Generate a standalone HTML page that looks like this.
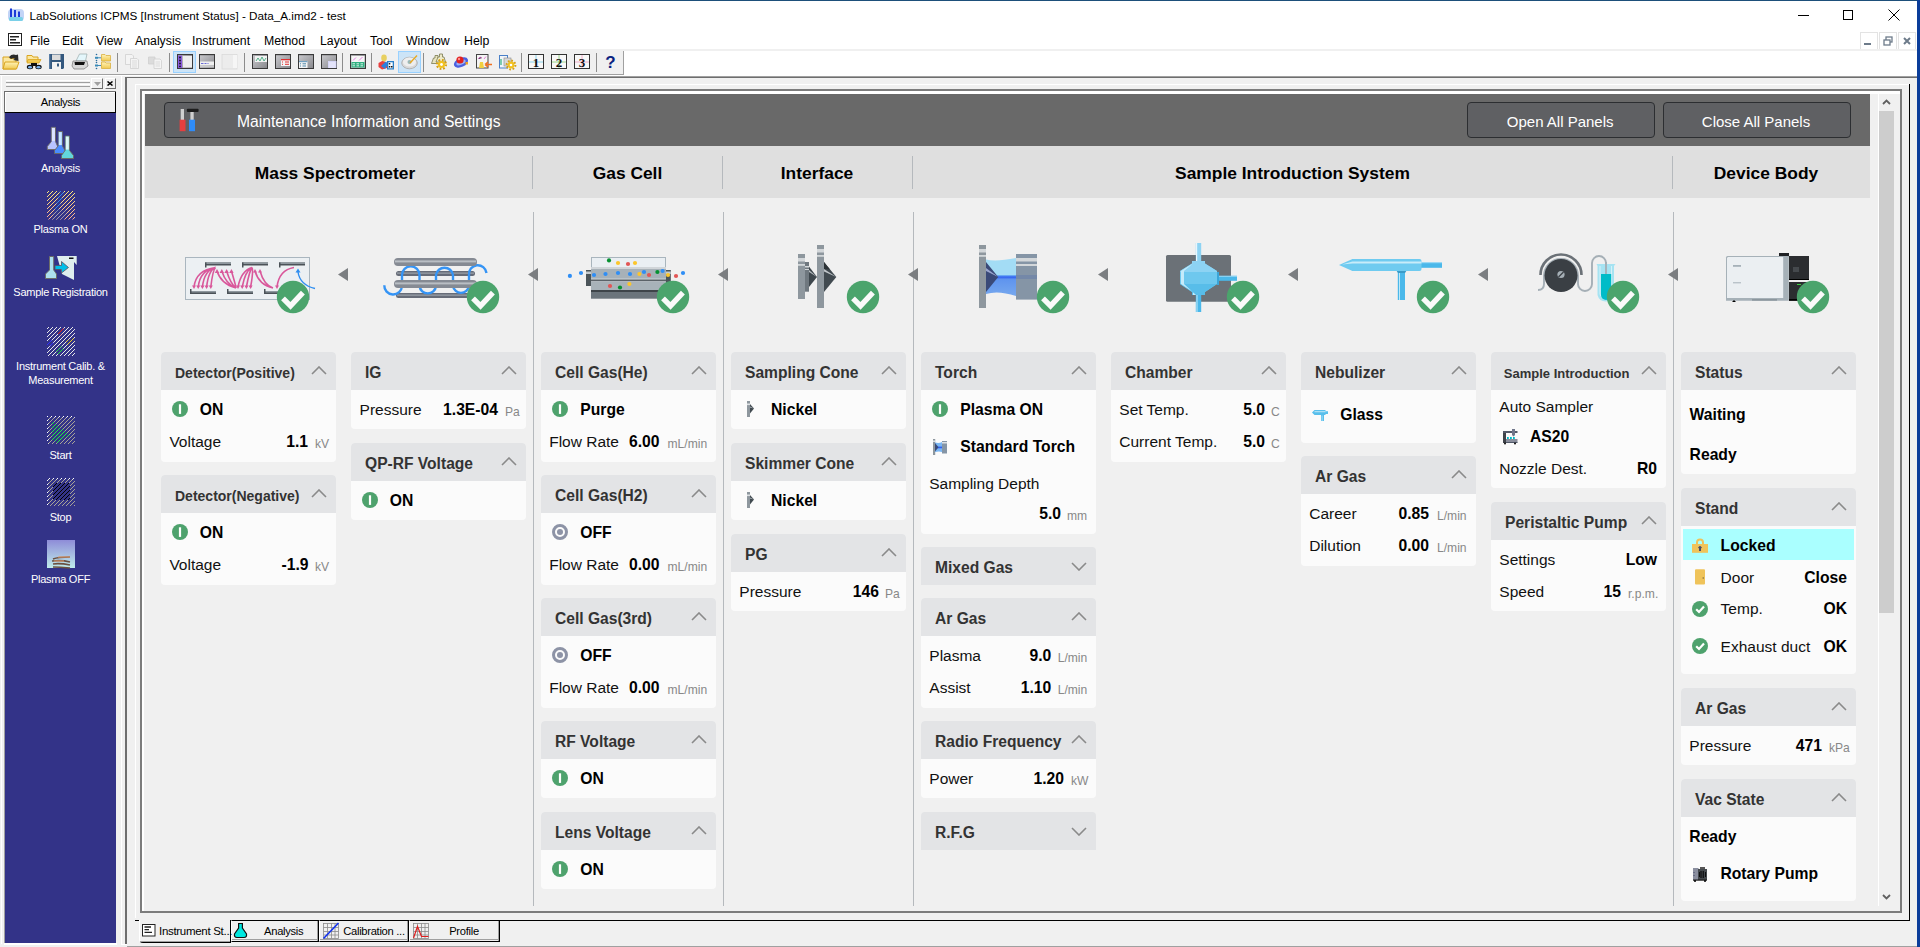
<!DOCTYPE html>
<html><head><meta charset="utf-8"><title>LabSolutions ICPMS</title>
<style>
html,body{margin:0;padding:0;width:1920px;height:947px;overflow:hidden;background:#f0f0f0;font-family:"Liberation Sans", sans-serif;}
body>div,body>svg{position:absolute;}
</style></head><body>
<div style="left:0px;top:0px;width:1920px;height:947px;background:#f0f0f0"></div>
<div style="left:0px;top:0px;width:1920px;height:49px;background:#fff"></div>
<div style="left:0px;top:0px;width:1920px;height:1px;background:#1d4f7a"></div>
<div style="left:29.5px;top:10.10px;font-size:11.7px;line-height:11.7px;font-weight:400;color:#000;white-space:nowrap;">LabSolutions ICPMS [Instrument Status] - Data_A.imd2 - test</div>
<div style="left:1798px;top:15px;width:11px;height:1px;background:#000"></div>
<div style="left:1843px;top:10px;width:10px;height:10px;border:1px solid #000;box-sizing:border-box"></div>
<svg style="left:1888px;top:9px;" width="12" height="12" viewBox="0 0 12 12"><path d="M0.5 0.5L11.5 11.5M11.5 0.5L0.5 11.5" stroke="#000" stroke-width="1"/></svg>
<svg style="left:8px;top:33px;" width="15" height="13" viewBox="0 0 15 13"><rect x="0.5" y="0.5" width="13" height="12" fill="#fff" stroke="#222"/><rect x="2" y="3" width="9" height="1.5" fill="#222"/><rect x="2" y="6" width="6" height="1.5" fill="#222"/><rect x="2" y="9" width="10" height="1.5" fill="#222"/></svg>
<div style="left:30px;top:34.59px;font-size:12.3px;line-height:12.3px;font-weight:400;color:#000;white-space:nowrap;">File</div>
<div style="left:62px;top:34.59px;font-size:12.3px;line-height:12.3px;font-weight:400;color:#000;white-space:nowrap;">Edit</div>
<div style="left:96px;top:34.59px;font-size:12.3px;line-height:12.3px;font-weight:400;color:#000;white-space:nowrap;">View</div>
<div style="left:135px;top:34.59px;font-size:12.3px;line-height:12.3px;font-weight:400;color:#000;white-space:nowrap;">Analysis</div>
<div style="left:192px;top:34.59px;font-size:12.3px;line-height:12.3px;font-weight:400;color:#000;white-space:nowrap;">Instrument</div>
<div style="left:264px;top:34.59px;font-size:12.3px;line-height:12.3px;font-weight:400;color:#000;white-space:nowrap;">Method</div>
<div style="left:320px;top:34.59px;font-size:12.3px;line-height:12.3px;font-weight:400;color:#000;white-space:nowrap;">Layout</div>
<div style="left:370px;top:34.59px;font-size:12.3px;line-height:12.3px;font-weight:400;color:#000;white-space:nowrap;">Tool</div>
<div style="left:406px;top:34.59px;font-size:12.3px;line-height:12.3px;font-weight:400;color:#000;white-space:nowrap;">Window</div>
<div style="left:464px;top:34.59px;font-size:12.3px;line-height:12.3px;font-weight:400;color:#000;white-space:nowrap;">Help</div>
<div style="left:1860px;top:32px;width:18px;height:18px;border:1px solid #e3e3e3;box-sizing:border-box;background:#fff"></div>
<div style="left:1879px;top:32px;width:18px;height:18px;border:1px solid #e3e3e3;box-sizing:border-box;background:#fff"></div>
<div style="left:1898px;top:32px;width:18px;height:18px;border:1px solid #e3e3e3;box-sizing:border-box;background:#fff"></div>
<div style="left:1864px;top:43px;width:7px;height:2px;background:#6d7b8a"></div>
<svg style="left:1883px;top:36px;" width="10" height="10" viewBox="0 0 10 10"><rect x="3" y="1" width="6" height="5" fill="none" stroke="#6d7b8a" stroke-width="1.3"/><rect x="1" y="4" width="6" height="5" fill="#fff" stroke="#6d7b8a" stroke-width="1.3"/></svg>
<svg style="left:1903px;top:37px;" width="8" height="8" viewBox="0 0 8 8"><path d="M1 1L7 7M7 1L1 7" stroke="#6d7b8a" stroke-width="2"/></svg>
<div style="left:0px;top:49px;width:1917px;height:2px;background:#f0f0f0"></div>
<div style="left:0px;top:51px;width:1917px;height:25px;background:#fff"></div>
<div style="left:0px;top:51px;width:624px;height:24px;background:#f0f0f0"></div>
<div style="left:623px;top:51px;width:1px;height:24px;background:#a0a0a0"></div>
<div style="left:0px;top:74px;width:624px;height:1px;background:#a0a0a0"></div>
<div style="left:560px;top:76px;width:1357px;height:1px;background:#a0a0a0"></div>
<div style="left:560px;top:77px;width:1357px;height:1px;background:#fff"></div>
<div style="left:0px;top:75px;width:624px;height:1px;background:#fff"></div>
<div style="left:117px;top:53px;width:1px;height:19px;background:#8c8c8c"></div>
<div style="left:169px;top:53px;width:1px;height:19px;background:#8c8c8c"></div>
<div style="left:244px;top:53px;width:1px;height:19px;background:#8c8c8c"></div>
<div style="left:342px;top:53px;width:1px;height:19px;background:#8c8c8c"></div>
<div style="left:371px;top:53px;width:1px;height:19px;background:#8c8c8c"></div>
<div style="left:423px;top:53px;width:1px;height:19px;background:#8c8c8c"></div>
<div style="left:521px;top:53px;width:1px;height:19px;background:#8c8c8c"></div>
<div style="left:596px;top:53px;width:1px;height:19px;background:#8c8c8c"></div>
<div style="left:1px;top:76px;width:1px;height:868px;background:#fff"></div>
<div style="left:6px;top:80px;width:84px;height:1px;background:#fff"></div>
<div style="left:6px;top:82px;width:84px;height:1px;background:#a0a0a0"></div>
<div style="left:6px;top:84px;width:84px;height:1px;background:#fff"></div>
<div style="left:6px;top:86px;width:84px;height:1px;background:#a0a0a0"></div>
<div style="left:91px;top:78px;width:12px;height:11px;background:#f0f0f0;border-top:1px solid #fff;border-left:1px solid #fff;border-right:1px solid #6e6e6e;border-bottom:1px solid #6e6e6e;box-sizing:border-box"></div>
<div style="left:105px;top:78px;width:11px;height:11px;background:#f0f0f0;border-top:1px solid #fff;border-left:1px solid #fff;border-right:1px solid #6e6e6e;border-bottom:1px solid #6e6e6e;box-sizing:border-box"></div>
<svg style="left:107px;top:81px;" width="6" height="5" viewBox="0 0 6 5"><path d="M0.5 0.5L5.5 4.5M5.5 0.5L0.5 4.5" stroke="#000" stroke-width="1.5"/></svg>
<svg style="left:94px;top:82px;" width="7" height="4" viewBox="0 0 7 4"><path d="M0 0H7L3.5 4Z" fill="#a0a0a0"/></svg>
<div style="left:4px;top:91px;width:112px;height:22px;background:#f0f0f0;border-top:1px solid #6e6e6e;border-left:1px solid #6e6e6e;box-sizing:border-box"></div>
<div style="left:5px;top:92px;width:110px;height:20px;border-top:1px solid #fff;border-left:1px solid #fff;box-sizing:border-box"></div>
<div style="left:115px;top:92px;width:1px;height:21px;background:#000"></div>
<div style="left:5px;top:112px;width:111px;height:1px;background:#000"></div>
<div style="left:-539.5px;width:1200px;text-align:center;top:97.43px;font-size:11.3px;line-height:11.3px;font-weight:400;color:#000;white-space:nowrap;letter-spacing:-0.35px">Analysis</div>
<div style="left:4px;top:113px;width:112px;height:830px;background:#333388;border-left:1px solid #a0a0a0;box-sizing:border-box"></div>
<div style="left:4px;top:943px;width:113px;height:2px;background:#fff"></div>
<div style="left:121px;top:76px;width:1px;height:868px;background:#fff"></div>
<div style="left:-539.5px;width:1200px;text-align:center;top:162.69px;font-size:11px;line-height:11px;font-weight:400;color:#fff;white-space:nowrap;letter-spacing:-0.25px">Analysis</div>
<div style="left:-539.5px;width:1200px;text-align:center;top:224.19px;font-size:11px;line-height:11px;font-weight:400;color:#fff;white-space:nowrap;letter-spacing:-0.25px">Plasma ON</div>
<div style="left:-539.5px;width:1200px;text-align:center;top:286.69px;font-size:11px;line-height:11px;font-weight:400;color:#fff;white-space:nowrap;letter-spacing:-0.25px">Sample Registration</div>
<div style="left:-539.5px;width:1200px;text-align:center;top:361.19px;font-size:11px;line-height:11px;font-weight:400;color:#fff;white-space:nowrap;letter-spacing:-0.25px">Instrument Calib. &amp;</div>
<div style="left:-539.5px;width:1200px;text-align:center;top:374.69px;font-size:11px;line-height:11px;font-weight:400;color:#fff;white-space:nowrap;letter-spacing:-0.25px">Measurement</div>
<div style="left:-539.5px;width:1200px;text-align:center;top:449.69px;font-size:11px;line-height:11px;font-weight:400;color:#fff;white-space:nowrap;letter-spacing:-0.25px">Start</div>
<div style="left:-539.5px;width:1200px;text-align:center;top:511.69px;font-size:11px;line-height:11px;font-weight:400;color:#fff;white-space:nowrap;letter-spacing:-0.25px">Stop</div>
<div style="left:-539.5px;width:1200px;text-align:center;top:573.69px;font-size:11px;line-height:11px;font-weight:400;color:#fff;white-space:nowrap;letter-spacing:-0.25px">Plasma OFF</div>
<svg style="left:0px;top:0px;" width="120" height="947" viewBox="0 0 120 947"><defs><pattern id="hat" patternUnits="userSpaceOnUse" width="4" height="4"><rect x="0" y="3" width="1" height="1" fill="#fff"/><rect x="1" y="2" width="1" height="1" fill="#fff"/><rect x="2" y="1" width="1" height="1" fill="#fff"/><rect x="3" y="0" width="1" height="1" fill="#fff"/></pattern><mask id="hm"><rect x="0" y="0" width="120" height="947" fill="url(#hat)"/></mask><linearGradient id="pon" x1="0" y1="0" x2="0" y2="1"><stop offset="0" stop-color="#ffe878"/><stop offset="1" stop-color="#ffb090"/></linearGradient><linearGradient id="poff" x1="0" y1="0" x2="0" y2="1"><stop offset="0" stop-color="#8e8cd8"/><stop offset="1" stop-color="#bfeceb"/></linearGradient></defs><path d="M51.3 127.3H55.5V141.6L57.7 146.5V149.5H47.3V146.5L51.3 141.6Z" fill="#b8c4ff" stroke="#6d6a60" stroke-width="0.9"/><rect x="51.9" y="127.89999999999999" width="3.0" height="13" fill="#dde4ff"/><path d="M58.2 131.5H62.400000000000006V145.8L65 150.5V153.5H54.5V150.5L58.2 145.8Z" fill="#4a8cff" stroke="#6d6a60" stroke-width="0.9"/><rect x="58.800000000000004" y="132.1" width="3.0" height="13" fill="#c8e8ff"/><path d="M65.2 136H69.4V150.3L73.5 155.5V158.5H61.5V155.5L65.2 150.3Z" fill="#62d6dc" stroke="#6d6a60" stroke-width="0.9"/><rect x="65.8" y="136.6" width="3.0" height="13" fill="#e0f6f6"/><g mask="url(#hm)"><rect x="47" y="191" width="28" height="28.5" fill="url(#pon)"/><path d="M60 191L64 191L58 212H54Z" fill="#2f8cf0"/><path d="M54 210L68 210L64 219.5H52Z" fill="#9098b0" opacity="0.8"/></g><path d="M57 256H76.7V265L74 262V280L62 274Z" fill="#dfeeee"/><rect x="69" y="257.5" width="4.5" height="1.5" fill="#111"/><path d="M49.5 256.5H53.7V270L56.5 274V278.5H45.5V274L49.5 270Z" fill="#aee0ee" stroke="#6d6a60" stroke-width="0.9"/><path d="M55 265.5H61.5V261.5L68.5 267.5L61.5 273V269.5H55Z" fill="#00bfe8" stroke="#5a5060" stroke-width="0.8"/><g mask="url(#hm)"><rect x="47" y="327" width="28" height="29" fill="#e8e8e8"/><path d="M57 333L62 327L65 330L60 336Z" fill="#e02020"/><path d="M46 343L52 340L54 344L48 347Z" fill="#3030ff"/><path d="M66 341L73 337L75 341L68 346Z" fill="#f0d020"/><path d="M56 351L62 346L64 350L59 356Z" fill="#20e040"/></g><g mask="url(#hm)"><rect x="47" y="416" width="28" height="28" fill="#a8a498"/><path d="M52 421L70 435L58 443L52 440Z" fill="#20f040"/><rect x="47" y="416" width="28" height="1.5" fill="#fff"/><rect x="47" y="416" width="1.5" height="28" fill="#fff"/></g><g mask="url(#hm)"><rect x="47" y="478" width="28" height="28" fill="#a8a498"/><rect x="53" y="483" width="17" height="17" fill="#000"/><rect x="47" y="478" width="28" height="1.5" fill="#fff"/><rect x="47" y="478" width="1.5" height="28" fill="#fff"/></g><rect x="47" y="540" width="28" height="28" fill="url(#poff)"/><path d="M53 559Q58 557 70 557M52 561Q62 560 70 562M53 564Q60 563 70 565M53 567Q60 567 70 568" fill="none" stroke="#6a5040" stroke-width="1.6"/><path d="M58 557H70M54 561H64" stroke="#e8a070" stroke-width="1"/></svg>
<div style="left:125px;top:77px;width:2px;height:867px;background:#6e6e6e"></div>
<div style="left:125px;top:77px;width:1792px;height:1px;background:#6e6e6e"></div>
<div style="left:135px;top:84px;width:1775px;height:1px;background:#fff"></div>
<div style="left:135px;top:84px;width:1px;height:834px;background:#fff"></div>
<div style="left:135px;top:920px;width:4px;height:1px;background:#000"></div>
<div style="left:1909px;top:84px;width:1px;height:837px;background:#000"></div>
<div style="left:139px;top:920px;width:1771px;height:1px;background:#000"></div>
<div style="left:140px;top:89px;width:1762px;height:2px;background:#7c7c7c"></div>
<div style="left:140px;top:89px;width:2px;height:824px;background:#7c7c7c"></div>
<div style="left:1900px;top:89px;width:2px;height:824px;background:#7c7c7c"></div>
<div style="left:140px;top:911px;width:1762px;height:2px;background:#7c7c7c"></div>
<div style="left:142px;top:91px;width:1758px;height:3px;background:#fff"></div>
<div style="left:142px;top:91px;width:2px;height:820px;background:#fff"></div>
<div style="left:145px;top:94px;width:1725px;height:52px;background:#696969"></div>
<div style="left:164px;top:102px;width:414px;height:36px;background:#5f6063;border:1px solid #2c2e31;border-radius:4px;box-sizing:border-box"></div>
<div style="left:237px;top:113.75px;font-size:15.65px;line-height:15.65px;font-weight:400;color:#fff;white-space:nowrap;">Maintenance Information and Settings</div>
<div style="left:145px;top:146px;width:1725px;height:52px;background:#dfdfdf"></div>
<div style="left:532px;top:156px;width:1px;height:33px;background:#b5b9bd"></div>
<div style="left:533px;top:212px;width:1px;height:694px;background:#b5b9bd"></div>
<div style="left:722px;top:156px;width:1px;height:33px;background:#b5b9bd"></div>
<div style="left:723px;top:212px;width:1px;height:694px;background:#b5b9bd"></div>
<div style="left:912px;top:156px;width:1px;height:33px;background:#b5b9bd"></div>
<div style="left:913px;top:212px;width:1px;height:694px;background:#b5b9bd"></div>
<div style="left:1672px;top:156px;width:1px;height:33px;background:#b5b9bd"></div>
<div style="left:1673px;top:212px;width:1px;height:694px;background:#b5b9bd"></div>
<div style="left:-265px;width:1200px;text-align:center;top:164.77px;font-size:17.4px;line-height:17.4px;font-weight:700;color:#000;white-space:nowrap;">Mass Spectrometer</div>
<div style="left:27.5px;width:1200px;text-align:center;top:164.77px;font-size:17.4px;line-height:17.4px;font-weight:700;color:#000;white-space:nowrap;">Gas Cell</div>
<div style="left:217px;width:1200px;text-align:center;top:164.77px;font-size:17.4px;line-height:17.4px;font-weight:700;color:#000;white-space:nowrap;">Interface</div>
<div style="left:692.5px;width:1200px;text-align:center;top:164.77px;font-size:17.4px;line-height:17.4px;font-weight:700;color:#000;white-space:nowrap;">Sample Introduction System</div>
<div style="left:1166px;width:1200px;text-align:center;top:164.77px;font-size:17.4px;line-height:17.4px;font-weight:700;color:#000;white-space:nowrap;">Device Body</div>
<div style="left:1467px;top:102px;width:188px;height:36px;background:#5f6063;border:1px solid #2c2e31;border-radius:4px;box-sizing:border-box"></div>
<div style="left:1663px;top:102px;width:188px;height:36px;background:#5f6063;border:1px solid #2c2e31;border-radius:4px;box-sizing:border-box"></div>
<div style="left:960.2px;width:1200px;text-align:center;top:114.30px;font-size:15px;line-height:15px;font-weight:400;color:#fff;white-space:nowrap;">Open All Panels</div>
<div style="left:1156px;width:1200px;text-align:center;top:114.30px;font-size:15px;line-height:15px;font-weight:400;color:#fff;white-space:nowrap;">Close All Panels</div>
<div style="left:1878px;top:94px;width:1px;height:812px;background:#fff"></div>
<div style="left:1879px;top:111px;width:15px;height:502px;background:#cdcdcd"></div>
<svg style="left:1882px;top:99px;" width="9" height="6" viewBox="0 0 9 6"><path d="M1 5L4.5 1.5L8 5" fill="none" stroke="#606060" stroke-width="1.8"/></svg>
<svg style="left:1882px;top:894px;" width="9" height="6" viewBox="0 0 9 6"><path d="M1 1L4.5 4.5L8 1" fill="none" stroke="#606060" stroke-width="1.8"/></svg>
<svg style="left:0px;top:0px;" width="1920" height="947" viewBox="0 0 1920 947"><path d="M338 274.5L348 268V281Z" fill="#7b7e81"/><path d="M528 274.5L538 268V281Z" fill="#7b7e81"/><path d="M718 274.5L728 268V281Z" fill="#7b7e81"/><path d="M908 274.5L918 268V281Z" fill="#7b7e81"/><path d="M1098 274.5L1108 268V281Z" fill="#7b7e81"/><path d="M1288 274.5L1298 268V281Z" fill="#7b7e81"/><path d="M1478 274.5L1488 268V281Z" fill="#7b7e81"/><path d="M1668 274.5L1678 268V281Z" fill="#7b7e81"/><rect x="185.5" y="257.5" width="124" height="42" fill="#ecf0f3" stroke="#aab6bf" stroke-width="1"/><rect x="205" y="262.5" width="26" height="3" fill="#4b5258"/><rect x="205" y="262.5" width="26" height="1.5" fill="#8e979e"/><rect x="205" y="262.5" width="1.5" height="5" fill="#4b5258"/><rect x="242" y="262.5" width="26" height="3" fill="#4b5258"/><rect x="242" y="262.5" width="26" height="1.5" fill="#8e979e"/><rect x="242" y="262.5" width="1.5" height="5" fill="#4b5258"/><rect x="279" y="262.5" width="26" height="3" fill="#4b5258"/><rect x="279" y="262.5" width="26" height="1.5" fill="#8e979e"/><rect x="279" y="262.5" width="1.5" height="5" fill="#4b5258"/><rect x="190" y="291" width="26" height="3" fill="#4b5258"/><rect x="190" y="291" width="26" height="1.5" fill="#8e979e"/><rect x="190" y="289" width="1.5" height="4" fill="#4b5258"/><rect x="227" y="291" width="26" height="3" fill="#4b5258"/><rect x="227" y="291" width="26" height="1.5" fill="#8e979e"/><rect x="227" y="289" width="1.5" height="4" fill="#4b5258"/><rect x="264" y="291" width="26" height="3" fill="#4b5258"/><rect x="264" y="291" width="26" height="1.5" fill="#8e979e"/><rect x="264" y="289" width="1.5" height="4" fill="#4b5258"/><path d="M215.5 267.5 Q196.0 270 194.0 287 M215.5 267.5 Q200.2 270 198.2 287 M215.5 267.5 Q204.4 270 202.4 287 M215.5 267.5 Q208.6 270 206.6 287 M215.5 267.5 Q212.8 270 210.8 287 M236 288 Q221.0 284 217.0 271 M236 288 Q225.8 284 221.8 271 M236 288 Q230.6 284 226.6 271 M236 288 Q235.4 284 231.4 271 M252 267.5 Q241.0 271 238.0 287 M252 267.5 Q245.2 271 242.2 287 M252 267.5 Q249.4 271 246.4 287 M252 267.5 Q253.6 271 250.6 287 M273 288 Q259 285 255 271 M273 288 Q264 285 260 271 M294 267.5 Q279 270 277 287" fill="none" stroke="#d9589b" stroke-width="1.6"/><path d="M192.0 285.5H196.0L194.0 289Z" fill="#d9589b"/><path d="M196.2 285.5H200.2L198.2 289Z" fill="#d9589b"/><path d="M200.4 285.5H204.4L202.4 289Z" fill="#d9589b"/><path d="M204.6 285.5H208.6L206.6 289Z" fill="#d9589b"/><path d="M208.8 285.5H212.8L210.8 289Z" fill="#d9589b"/><path d="M214.8 273H219.2L217.0 269Z" fill="#d9589b"/><path d="M219.60000000000002 273H224.0L221.8 269Z" fill="#d9589b"/><path d="M224.4 273H228.79999999999998L226.6 269Z" fill="#d9589b"/><path d="M229.20000000000002 273H233.6L231.4 269Z" fill="#d9589b"/><path d="M236.0 285.5H240.0L238.0 289Z" fill="#d9589b"/><path d="M240.2 285.5H244.2L242.2 289Z" fill="#d9589b"/><path d="M244.4 285.5H248.4L246.4 289Z" fill="#d9589b"/><path d="M248.6 285.5H252.6L250.6 289Z" fill="#d9589b"/><path d="M253 272.5H257L255 269Z" fill="#d9589b"/><path d="M258 272.5H262L260 269Z" fill="#d9589b"/><path d="M275 285.5H279L277 289Z" fill="#d9589b"/><path d="M298 272 Q300 285 315 288.5" fill="none" stroke="#2f8ef0" stroke-width="1.4"/><path d="M295.5 272.5H300.5L298 268.5Z" fill="#2f8ef0"/><rect x="396" y="271" width="79" height="5" rx="2.5" fill="#676c78"/><rect x="397" y="272.5" width="77" height="1.25" fill="#9aa0a8"/><rect x="396" y="293" width="79" height="5" rx="2.5" fill="#676c78"/><rect x="397" y="294.5" width="77" height="1.25" fill="#9aa0a8"/><path d="M384.3 285.2A8.8 8.8 0 0 0 402 286V275A8.75 8.75 0 0 1 419.5 275V286A8.3 8.3 0 0 0 436 286V275A8.6 8.6 0 0 1 453 275V286A8.1 8.1 0 0 0 469 286V275A8.8 8.8 0 0 1 486.5 273" fill="none" stroke="#3594f5" stroke-width="2.4"/><rect x="394" y="258" width="83" height="8" rx="4.0" fill="#858a93"/><rect x="395" y="260.4" width="81" height="2.0" fill="#b9bec4"/><rect x="394" y="280" width="83" height="8" rx="4.0" fill="#858a93"/><rect x="395" y="282.4" width="81" height="2.0" fill="#b9bec4"/><rect x="586" y="270" width="5" height="16" fill="#4b5459"/><rect x="586" y="271.5" width="5" height="2.5" fill="#c3c9cd"/><rect x="665.8" y="270" width="5" height="16" fill="#4b5459"/><rect x="665.8" y="271.5" width="5" height="2.5" fill="#c3c9cd"/><rect x="591.5" y="257.5" width="74" height="11.5" fill="#eaeff3" stroke="#a9b5bd" stroke-width="1"/><rect x="591" y="267" width="75" height="2" fill="#d0d5d9"/><rect x="591" y="269" width="75" height="10" fill="#a7b1b8"/><rect x="591" y="278.5" width="75" height="1.2" fill="#ccd3d8"/><rect x="591" y="279.5" width="75" height="1.8" fill="#5b6268"/><rect x="591" y="281.3" width="75" height="8.7" fill="#a8b2b9"/><rect x="591" y="290" width="75" height="2" fill="#3e4449"/><rect x="591" y="292" width="75" height="6.7" fill="#6b747b"/><circle cx="569.9" cy="275.9" r="2.1" fill="#2f8ef5"/><circle cx="581" cy="273" r="2.1" fill="#2f8ef5"/><circle cx="594" cy="275" r="2.1" fill="#2f8ef5"/><circle cx="605.5" cy="274" r="2.1" fill="#2f8ef5"/><circle cx="618" cy="273" r="2.1" fill="#2f8ef5"/><circle cx="630" cy="274" r="2.1" fill="#2f8ef5"/><circle cx="644" cy="272" r="2.1" fill="#2f8ef5"/><circle cx="662.6" cy="271" r="2.1" fill="#2f8ef5"/><circle cx="683" cy="273" r="2.1" fill="#2f8ef5"/><circle cx="609" cy="260.4" r="2.1" fill="#079132"/><circle cx="657.4" cy="272" r="2.1" fill="#079132"/><circle cx="620" cy="287.5" r="2.1" fill="#079132"/><circle cx="618" cy="263" r="2.1" fill="#fcc62b"/><circle cx="635" cy="263" r="2.1" fill="#fcc62b"/><circle cx="639.4" cy="274" r="2.1" fill="#fcc62b"/><circle cx="668" cy="275" r="2.1" fill="#fcc62b"/><circle cx="629.4" cy="284" r="2.1" fill="#fcc62b"/><circle cx="628" cy="264" r="2.1" fill="#e25555"/><circle cx="649" cy="275" r="2.1" fill="#e25555"/><circle cx="676" cy="276" r="2.1" fill="#e25555"/><circle cx="610" cy="286" r="2.1" fill="#e25555"/><path d="M809 266.5L817 277L809 287Z" fill="#3e474d"/><path d="M809 270L817 277L809 272Z" fill="#b8bec2"/><rect x="805" y="262" width="4" height="29.7" fill="#6f787f"/><rect x="805" y="266" width="4" height="1.5" fill="#d3d7da"/><rect x="805" y="269" width="4" height="1" fill="#d3d7da"/><rect x="798" y="254" width="7" height="45" fill="#8e979e"/><rect x="798" y="258" width="7" height="3.5" fill="#d3d7da"/><rect x="798" y="264" width="7" height="1.8" fill="#d3d7da"/><path d="M824 262L836.3 277L824 292Z" fill="#414a50"/><path d="M824 269L836.3 277L824 271.5Z" fill="#c0c6ca"/><path d="M824 262L830 269.5L824 269Z" fill="#2c3236"/><rect x="817" y="245" width="7" height="63" fill="#8e979e"/><rect x="817" y="249" width="7" height="3.5" fill="#d3d7da"/><rect x="817" y="255" width="7" height="1.8" fill="#d3d7da"/><defs><linearGradient id="pl" x1="0" y1="0" x2="0" y2="1"><stop offset="0" stop-color="#a3dcf5"/><stop offset="0.45" stop-color="#a3dcf5"/><stop offset="0.46" stop-color="#6aa9f4"/><stop offset="0.5" stop-color="#2f5ff0"/><stop offset="0.56" stop-color="#5f94ee"/><stop offset="1" stop-color="#76a8ee"/></linearGradient></defs><path d="M986 259.5Q996 262 1016 258V296Q998 290 986 294Z" fill="url(#pl)"/><path d="M986 262L998.2 277L986 292Z" fill="#3a4a78"/><path d="M986 268L998.2 277L986 271Z" fill="#9aa6cf"/><rect x="979" y="245" width="7" height="63" fill="#8e979e"/><rect x="979" y="249" width="7" height="3.5" fill="#d3d7da"/><rect x="979" y="255" width="7" height="1.8" fill="#d3d7da"/><rect x="1016" y="254" width="21" height="45.6" fill="#8595a6"/><rect x="1016" y="258" width="21" height="3.5" fill="#d3d7da"/><rect x="1016" y="264" width="21" height="2" fill="#d3d7da"/><rect x="1016" y="275" width="21" height="4" fill="#7488a8"/><rect x="1166" y="255" width="65" height="46.8" rx="1.5" fill="#6b7177"/><rect x="1195.8" y="243" width="5.4" height="18" fill="#8dd3f3"/><rect x="1196" y="243" width="1.2" height="18" fill="#e6f6fd"/><rect x="1195.8" y="295" width="5.4" height="17" fill="#4ab8ea"/><rect x="1196.5" y="295" width="1" height="17" fill="#bfe8f8"/><rect x="1219" y="275.8" width="18" height="5" fill="#4ab8ea"/><rect x="1219" y="275.8" width="18" height="1" fill="#9ad8f4"/><rect x="1217" y="272" width="2" height="13" fill="#3aa5d8"/><path d="M1192 261H1205V263.5L1217 271V284L1205 292V295H1192V292L1180 284V271L1192 263.5Z" fill="#6ec8ee"/><path d="M1192 261H1205V263.5L1217 271V272H1180V271L1192 263.5Z" fill="#8dd3f3"/><path d="M1180 284H1217L1205 292V295H1192V292Z" fill="#58bde9"/><path d="M1196 261L1184 271V284L1196 295H1193V292L1181 284V271L1193 263.5Z" fill="#c5ebfa"/><rect x="1419" y="262" width="23" height="5.8" fill="#4ab8ea"/><rect x="1419" y="262" width="23" height="1.2" fill="#9ad8f4"/><rect x="1397.8" y="270" width="7.2" height="30" fill="#4ab8ea"/><rect x="1399" y="272" width="1" height="28" fill="#bfe8f8"/><path d="M1396 270H1407L1405 273H1398Z" fill="#3a9bc8"/><path d="M1339 265L1352.4 259H1419.5Q1421.5 259 1421.5 261V269Q1421.5 271 1419.5 271H1352.4Z" fill="#6fcbf0"/><path d="M1342 264.5L1352.4 261.5H1421.5V263.5H1352.4Z" fill="#c8ecf9"/><path d="M1540.5 275A20.5 20.5 0 0 1 1581.5 275" fill="none" stroke="#6b7177" stroke-width="2.6"/><path d="M1538 290Q1544 290 1544 284V276A17 17 0 0 1 1578 276V284A7 7 0 0 0 1592 284V263A7 7 0 0 1 1606 263V274" fill="none" stroke="#a5afb6" stroke-width="1.9"/><circle cx="1561" cy="275.5" r="16.5" fill="#3a3f44"/><circle cx="1561" cy="274.5" r="3.6" fill="#a5afb6"/><path d="M1558.5 277L1563.5 272" stroke="#3a3f44" stroke-width="1.2"/><path d="M1596.5 264H1615.5L1614 266V295A8.5 8.5 0 0 1 1597.5 295V266Z" fill="#a6e3f2"/><path d="M1599.5 266V294A6.5 6.5 0 0 0 1612 294V266H1611V294A5.5 5.5 0 0 1 1600.5 294V266Z" fill="#d5f2f9"/><path d="M1601 274H1611.2V295A5 5 0 0 1 1601 295Z" fill="#00bcc8"/><path d="M1606 262V274" stroke="#a5afb6" stroke-width="1.9"/><rect x="1779" y="253" width="10" height="3.5" fill="#1f2124"/><rect x="1789" y="256" width="20" height="24" fill="#2b2d30"/><rect x="1789" y="279" width="20" height="1" fill="#000"/><rect x="1793" y="267" width="6" height="5" fill="#45494d"/><rect x="1789" y="282" width="20" height="18.7" fill="#2b2d30"/><rect x="1789" y="299" width="20" height="1.7" fill="#000"/><rect x="1797" y="284" width="4" height="1" fill="#3ccf3c"/><path d="M1727.5 256H1788.8V300.7H1726V257.5Q1726 256 1727.5 256Z" fill="#a6b1b8"/><path d="M1728 257H1783.2V298H1727V258Z" fill="#ebeff2"/><rect x="1733" y="265" width="8" height="1.8" fill="#a6b1b8"/><rect x="1733" y="282.3" width="8" height="1" fill="#a6b1b8"/><rect x="1752" y="299" width="25" height="1.7" fill="#8c979e"/><path d="M1732 302H1736L1734 300Z" fill="#000"/><circle cx="293" cy="297" r="16.2" fill="#4ba46c"/><path d="M283 298.4L290.5 305.9L302.9 292.7" fill="none" stroke="#fafafa" stroke-width="5.4"/><circle cx="483" cy="297" r="16.2" fill="#4ba46c"/><path d="M473 298.4L480.5 305.9L492.9 292.7" fill="none" stroke="#fafafa" stroke-width="5.4"/><circle cx="673" cy="297" r="16.2" fill="#4ba46c"/><path d="M663 298.4L670.5 305.9L682.9 292.7" fill="none" stroke="#fafafa" stroke-width="5.4"/><circle cx="863" cy="297" r="16.2" fill="#4ba46c"/><path d="M853 298.4L860.5 305.9L872.9 292.7" fill="none" stroke="#fafafa" stroke-width="5.4"/><circle cx="1053" cy="297" r="16.2" fill="#4ba46c"/><path d="M1043 298.4L1050.5 305.9L1062.9 292.7" fill="none" stroke="#fafafa" stroke-width="5.4"/><circle cx="1243" cy="297" r="16.2" fill="#4ba46c"/><path d="M1233 298.4L1240.5 305.9L1252.9 292.7" fill="none" stroke="#fafafa" stroke-width="5.4"/><circle cx="1433" cy="297" r="16.2" fill="#4ba46c"/><path d="M1423 298.4L1430.5 305.9L1442.9 292.7" fill="none" stroke="#fafafa" stroke-width="5.4"/><circle cx="1623" cy="297" r="16.2" fill="#4ba46c"/><path d="M1613 298.4L1620.5 305.9L1632.9 292.7" fill="none" stroke="#fafafa" stroke-width="5.4"/><circle cx="1813" cy="297" r="16.2" fill="#4ba46c"/><path d="M1803 298.4L1810.5 305.9L1822.9 292.7" fill="none" stroke="#fafafa" stroke-width="5.4"/></svg>
<div style="left:161px;top:352px;width:175px;height:110px;background:#fbfbfb;border-radius:4px"></div>
<div style="left:161px;top:352px;width:175px;height:38px;background:#e3e4e6;border-radius:4px 4px 0 0"></div>
<div style="left:175px;top:366.15px;font-size:14px;line-height:14px;font-weight:700;color:#333;white-space:nowrap;">Detector(Positive)</div>
<svg style="left:311px;top:366px;" width="16" height="9" viewBox="0 0 16 9"><path d="M1 8L8 1L15 8" fill="none" stroke="#8a8a8a" stroke-width="1.6"/></svg>
<svg style="left:172px;top:401px;" width="16" height="16" viewBox="0 0 16 16"><circle cx="8" cy="8" r="8" fill="#4ea26d"/><rect x="6.9" y="3.3" width="2.2" height="9.6" fill="#fff"/></svg>
<div style="left:199.8px;top:401.71px;font-size:15.7px;line-height:15.7px;font-weight:700;color:#000;white-space:nowrap;">ON</div>
<div style="left:169.4px;top:433.88px;font-size:15.5px;line-height:15.5px;font-weight:400;color:#111;white-space:nowrap;">Voltage</div>
<div style="left:-292px;width:600px;text-align:right;top:433.71px;font-size:15.7px;line-height:15.7px;font-weight:700;color:#000;white-space:nowrap;">1.1</div>
<div style="left:315px;top:438.26px;font-size:12.1px;line-height:12.1px;font-weight:400;color:#888;white-space:nowrap;">kV</div>
<div style="left:161px;top:475px;width:175px;height:110px;background:#fbfbfb;border-radius:4px"></div>
<div style="left:161px;top:475px;width:175px;height:38px;background:#e3e4e6;border-radius:4px 4px 0 0"></div>
<div style="left:175px;top:489.15px;font-size:14px;line-height:14px;font-weight:700;color:#333;white-space:nowrap;">Detector(Negative)</div>
<svg style="left:311px;top:489px;" width="16" height="9" viewBox="0 0 16 9"><path d="M1 8L8 1L15 8" fill="none" stroke="#8a8a8a" stroke-width="1.6"/></svg>
<svg style="left:172px;top:524px;" width="16" height="16" viewBox="0 0 16 16"><circle cx="8" cy="8" r="8" fill="#4ea26d"/><rect x="6.9" y="3.3" width="2.2" height="9.6" fill="#fff"/></svg>
<div style="left:199.8px;top:524.71px;font-size:15.7px;line-height:15.7px;font-weight:700;color:#000;white-space:nowrap;">ON</div>
<div style="left:169.4px;top:556.88px;font-size:15.5px;line-height:15.5px;font-weight:400;color:#111;white-space:nowrap;">Voltage</div>
<div style="left:-291.5px;width:600px;text-align:right;top:556.71px;font-size:15.7px;line-height:15.7px;font-weight:700;color:#000;white-space:nowrap;">-1.9</div>
<div style="left:315px;top:561.26px;font-size:12.1px;line-height:12.1px;font-weight:400;color:#888;white-space:nowrap;">kV</div>
<div style="left:351px;top:352px;width:175px;height:77px;background:#fbfbfb;border-radius:4px"></div>
<div style="left:351px;top:352px;width:175px;height:38px;background:#e3e4e6;border-radius:4px 4px 0 0"></div>
<div style="left:365px;top:364.79px;font-size:15.6px;line-height:15.6px;font-weight:700;color:#333;white-space:nowrap;">IG</div>
<svg style="left:501px;top:366px;" width="16" height="9" viewBox="0 0 16 9"><path d="M1 8L8 1L15 8" fill="none" stroke="#8a8a8a" stroke-width="1.6"/></svg>
<div style="left:359.6px;top:401.88px;font-size:15.5px;line-height:15.5px;font-weight:400;color:#111;white-space:nowrap;">Pressure</div>
<div style="left:-102px;width:600px;text-align:right;top:401.71px;font-size:15.7px;line-height:15.7px;font-weight:700;color:#000;white-space:nowrap;">1.3E-04</div>
<div style="left:505px;top:406.26px;font-size:12.1px;line-height:12.1px;font-weight:400;color:#888;white-space:nowrap;">Pa</div>
<div style="left:351px;top:443px;width:175px;height:77px;background:#fbfbfb;border-radius:4px"></div>
<div style="left:351px;top:443px;width:175px;height:38px;background:#e3e4e6;border-radius:4px 4px 0 0"></div>
<div style="left:365px;top:455.79px;font-size:15.6px;line-height:15.6px;font-weight:700;color:#333;white-space:nowrap;">QP-RF Voltage</div>
<svg style="left:501px;top:457px;" width="16" height="9" viewBox="0 0 16 9"><path d="M1 8L8 1L15 8" fill="none" stroke="#8a8a8a" stroke-width="1.6"/></svg>
<svg style="left:362px;top:492px;" width="16" height="16" viewBox="0 0 16 16"><circle cx="8" cy="8" r="8" fill="#4ea26d"/><rect x="6.9" y="3.3" width="2.2" height="9.6" fill="#fff"/></svg>
<div style="left:389.8px;top:492.71px;font-size:15.7px;line-height:15.7px;font-weight:700;color:#000;white-space:nowrap;">ON</div>
<div style="left:541px;top:352px;width:175px;height:110px;background:#fbfbfb;border-radius:4px"></div>
<div style="left:541px;top:352px;width:175px;height:38px;background:#e3e4e6;border-radius:4px 4px 0 0"></div>
<div style="left:555px;top:364.79px;font-size:15.6px;line-height:15.6px;font-weight:700;color:#333;white-space:nowrap;">Cell Gas(He)</div>
<svg style="left:691px;top:366px;" width="16" height="9" viewBox="0 0 16 9"><path d="M1 8L8 1L15 8" fill="none" stroke="#8a8a8a" stroke-width="1.6"/></svg>
<svg style="left:552px;top:401px;" width="16" height="16" viewBox="0 0 16 16"><circle cx="8" cy="8" r="8" fill="#4ea26d"/><rect x="6.9" y="3.3" width="2.2" height="9.6" fill="#fff"/></svg>
<div style="left:580.3px;top:401.71px;font-size:15.7px;line-height:15.7px;font-weight:700;color:#000;white-space:nowrap;">Purge</div>
<div style="left:549.2px;top:433.88px;font-size:15.5px;line-height:15.5px;font-weight:400;color:#111;white-space:nowrap;">Flow Rate</div>
<div style="left:59.5px;width:600px;text-align:right;top:433.71px;font-size:15.7px;line-height:15.7px;font-weight:700;color:#000;white-space:nowrap;">6.00</div>
<div style="left:667.5px;top:438.26px;font-size:12.1px;line-height:12.1px;font-weight:400;color:#888;white-space:nowrap;">mL/min</div>
<div style="left:541px;top:475px;width:175px;height:110px;background:#fbfbfb;border-radius:4px"></div>
<div style="left:541px;top:475px;width:175px;height:38px;background:#e3e4e6;border-radius:4px 4px 0 0"></div>
<div style="left:555px;top:487.79px;font-size:15.6px;line-height:15.6px;font-weight:700;color:#333;white-space:nowrap;">Cell Gas(H2)</div>
<svg style="left:691px;top:489px;" width="16" height="9" viewBox="0 0 16 9"><path d="M1 8L8 1L15 8" fill="none" stroke="#8a8a8a" stroke-width="1.6"/></svg>
<svg style="left:552px;top:524px;" width="16" height="16" viewBox="0 0 16 16"><circle cx="8" cy="8" r="6.5" fill="none" stroke="#8d93a6" stroke-width="3"/><circle cx="8" cy="8" r="3" fill="#8d93a6"/></svg>
<div style="left:580.3px;top:524.71px;font-size:15.7px;line-height:15.7px;font-weight:700;color:#000;white-space:nowrap;">OFF</div>
<div style="left:549.2px;top:556.88px;font-size:15.5px;line-height:15.5px;font-weight:400;color:#111;white-space:nowrap;">Flow Rate</div>
<div style="left:59.5px;width:600px;text-align:right;top:556.71px;font-size:15.7px;line-height:15.7px;font-weight:700;color:#000;white-space:nowrap;">0.00</div>
<div style="left:667.5px;top:561.26px;font-size:12.1px;line-height:12.1px;font-weight:400;color:#888;white-space:nowrap;">mL/min</div>
<div style="left:541px;top:598px;width:175px;height:110px;background:#fbfbfb;border-radius:4px"></div>
<div style="left:541px;top:598px;width:175px;height:38px;background:#e3e4e6;border-radius:4px 4px 0 0"></div>
<div style="left:555px;top:610.79px;font-size:15.6px;line-height:15.6px;font-weight:700;color:#333;white-space:nowrap;">Cell Gas(3rd)</div>
<svg style="left:691px;top:612px;" width="16" height="9" viewBox="0 0 16 9"><path d="M1 8L8 1L15 8" fill="none" stroke="#8a8a8a" stroke-width="1.6"/></svg>
<svg style="left:552px;top:647px;" width="16" height="16" viewBox="0 0 16 16"><circle cx="8" cy="8" r="6.5" fill="none" stroke="#8d93a6" stroke-width="3"/><circle cx="8" cy="8" r="3" fill="#8d93a6"/></svg>
<div style="left:580.3px;top:647.71px;font-size:15.7px;line-height:15.7px;font-weight:700;color:#000;white-space:nowrap;">OFF</div>
<div style="left:549.2px;top:679.88px;font-size:15.5px;line-height:15.5px;font-weight:400;color:#111;white-space:nowrap;">Flow Rate</div>
<div style="left:59.5px;width:600px;text-align:right;top:679.71px;font-size:15.7px;line-height:15.7px;font-weight:700;color:#000;white-space:nowrap;">0.00</div>
<div style="left:667.5px;top:684.26px;font-size:12.1px;line-height:12.1px;font-weight:400;color:#888;white-space:nowrap;">mL/min</div>
<div style="left:541px;top:721px;width:175px;height:77px;background:#fbfbfb;border-radius:4px"></div>
<div style="left:541px;top:721px;width:175px;height:38px;background:#e3e4e6;border-radius:4px 4px 0 0"></div>
<div style="left:555px;top:733.79px;font-size:15.6px;line-height:15.6px;font-weight:700;color:#333;white-space:nowrap;">RF Voltage</div>
<svg style="left:691px;top:735px;" width="16" height="9" viewBox="0 0 16 9"><path d="M1 8L8 1L15 8" fill="none" stroke="#8a8a8a" stroke-width="1.6"/></svg>
<svg style="left:552px;top:770px;" width="16" height="16" viewBox="0 0 16 16"><circle cx="8" cy="8" r="8" fill="#4ea26d"/><rect x="6.9" y="3.3" width="2.2" height="9.6" fill="#fff"/></svg>
<div style="left:580.3px;top:770.71px;font-size:15.7px;line-height:15.7px;font-weight:700;color:#000;white-space:nowrap;">ON</div>
<div style="left:541px;top:812px;width:175px;height:77px;background:#fbfbfb;border-radius:4px"></div>
<div style="left:541px;top:812px;width:175px;height:38px;background:#e3e4e6;border-radius:4px 4px 0 0"></div>
<div style="left:555px;top:824.79px;font-size:15.6px;line-height:15.6px;font-weight:700;color:#333;white-space:nowrap;">Lens Voltage</div>
<svg style="left:691px;top:826px;" width="16" height="9" viewBox="0 0 16 9"><path d="M1 8L8 1L15 8" fill="none" stroke="#8a8a8a" stroke-width="1.6"/></svg>
<svg style="left:552px;top:861px;" width="16" height="16" viewBox="0 0 16 16"><circle cx="8" cy="8" r="8" fill="#4ea26d"/><rect x="6.9" y="3.3" width="2.2" height="9.6" fill="#fff"/></svg>
<div style="left:580.3px;top:861.71px;font-size:15.7px;line-height:15.7px;font-weight:700;color:#000;white-space:nowrap;">ON</div>
<div style="left:731px;top:352px;width:175px;height:77px;background:#fbfbfb;border-radius:4px"></div>
<div style="left:731px;top:352px;width:175px;height:38px;background:#e3e4e6;border-radius:4px 4px 0 0"></div>
<div style="left:745px;top:364.79px;font-size:15.6px;line-height:15.6px;font-weight:700;color:#333;white-space:nowrap;">Sampling Cone</div>
<svg style="left:881px;top:366px;" width="16" height="9" viewBox="0 0 16 9"><path d="M1 8L8 1L15 8" fill="none" stroke="#8a8a8a" stroke-width="1.6"/></svg>
<div style="left:771px;top:401.71px;font-size:15.7px;line-height:15.7px;font-weight:700;color:#000;white-space:nowrap;">Nickel</div>
<div style="left:731px;top:443px;width:175px;height:77px;background:#fbfbfb;border-radius:4px"></div>
<div style="left:731px;top:443px;width:175px;height:38px;background:#e3e4e6;border-radius:4px 4px 0 0"></div>
<div style="left:745px;top:455.79px;font-size:15.6px;line-height:15.6px;font-weight:700;color:#333;white-space:nowrap;">Skimmer Cone</div>
<svg style="left:881px;top:457px;" width="16" height="9" viewBox="0 0 16 9"><path d="M1 8L8 1L15 8" fill="none" stroke="#8a8a8a" stroke-width="1.6"/></svg>
<div style="left:771px;top:492.71px;font-size:15.7px;line-height:15.7px;font-weight:700;color:#000;white-space:nowrap;">Nickel</div>
<div style="left:731px;top:534px;width:175px;height:77px;background:#fbfbfb;border-radius:4px"></div>
<div style="left:731px;top:534px;width:175px;height:38px;background:#e3e4e6;border-radius:4px 4px 0 0"></div>
<div style="left:745px;top:546.79px;font-size:15.6px;line-height:15.6px;font-weight:700;color:#333;white-space:nowrap;">PG</div>
<svg style="left:881px;top:548px;" width="16" height="9" viewBox="0 0 16 9"><path d="M1 8L8 1L15 8" fill="none" stroke="#8a8a8a" stroke-width="1.6"/></svg>
<div style="left:739.3px;top:583.88px;font-size:15.5px;line-height:15.5px;font-weight:400;color:#111;white-space:nowrap;">Pressure</div>
<div style="left:279px;width:600px;text-align:right;top:583.71px;font-size:15.7px;line-height:15.7px;font-weight:700;color:#000;white-space:nowrap;">146</div>
<div style="left:885px;top:588.26px;font-size:12.1px;line-height:12.1px;font-weight:400;color:#888;white-space:nowrap;">Pa</div>
<div style="left:921px;top:352px;width:175px;height:182px;background:#fbfbfb;border-radius:4px"></div>
<div style="left:921px;top:352px;width:175px;height:38px;background:#e3e4e6;border-radius:4px 4px 0 0"></div>
<div style="left:935px;top:364.79px;font-size:15.6px;line-height:15.6px;font-weight:700;color:#333;white-space:nowrap;">Torch</div>
<svg style="left:1071px;top:366px;" width="16" height="9" viewBox="0 0 16 9"><path d="M1 8L8 1L15 8" fill="none" stroke="#8a8a8a" stroke-width="1.6"/></svg>
<svg style="left:932px;top:401px;" width="16" height="16" viewBox="0 0 16 16"><circle cx="8" cy="8" r="8" fill="#4ea26d"/><rect x="6.9" y="3.3" width="2.2" height="9.6" fill="#fff"/></svg>
<div style="left:960.3px;top:401.71px;font-size:15.7px;line-height:15.7px;font-weight:700;color:#000;white-space:nowrap;">Plasma ON</div>
<div style="left:960.3px;top:438.71px;font-size:15.7px;line-height:15.7px;font-weight:700;color:#000;white-space:nowrap;">Standard Torch</div>
<div style="left:929.2px;top:475.88px;font-size:15.5px;line-height:15.5px;font-weight:400;color:#111;white-space:nowrap;">Sampling Depth</div>
<div style="left:461px;width:600px;text-align:right;top:505.71px;font-size:15.7px;line-height:15.7px;font-weight:700;color:#000;white-space:nowrap;">5.0</div>
<div style="left:1067px;top:510.26px;font-size:12.1px;line-height:12.1px;font-weight:400;color:#888;white-space:nowrap;">mm</div>
<div style="left:921px;top:547px;width:175px;height:38px;background:#e3e4e6;border-radius:4px 4px 0 0"></div>
<div style="left:935px;top:559.79px;font-size:15.6px;line-height:15.6px;font-weight:700;color:#333;white-space:nowrap;">Mixed Gas</div>
<svg style="left:1071px;top:562px;" width="16" height="9" viewBox="0 0 16 9"><path d="M1 1L8 8L15 1" fill="none" stroke="#8a8a8a" stroke-width="1.6"/></svg>
<div style="left:921px;top:598px;width:175px;height:110px;background:#fbfbfb;border-radius:4px"></div>
<div style="left:921px;top:598px;width:175px;height:38px;background:#e3e4e6;border-radius:4px 4px 0 0"></div>
<div style="left:935px;top:610.79px;font-size:15.6px;line-height:15.6px;font-weight:700;color:#333;white-space:nowrap;">Ar Gas</div>
<svg style="left:1071px;top:612px;" width="16" height="9" viewBox="0 0 16 9"><path d="M1 8L8 1L15 8" fill="none" stroke="#8a8a8a" stroke-width="1.6"/></svg>
<div style="left:929.3px;top:647.88px;font-size:15.5px;line-height:15.5px;font-weight:400;color:#111;white-space:nowrap;">Plasma</div>
<div style="left:451.29999999999995px;width:600px;text-align:right;top:647.71px;font-size:15.7px;line-height:15.7px;font-weight:700;color:#000;white-space:nowrap;">9.0</div>
<div style="left:1057.7px;top:652.26px;font-size:12.1px;line-height:12.1px;font-weight:400;color:#888;white-space:nowrap;">L/min</div>
<div style="left:929.3px;top:679.88px;font-size:15.5px;line-height:15.5px;font-weight:400;color:#111;white-space:nowrap;">Assist</div>
<div style="left:451.29999999999995px;width:600px;text-align:right;top:679.71px;font-size:15.7px;line-height:15.7px;font-weight:700;color:#000;white-space:nowrap;">1.10</div>
<div style="left:1057.7px;top:684.26px;font-size:12.1px;line-height:12.1px;font-weight:400;color:#888;white-space:nowrap;">L/min</div>
<div style="left:921px;top:721px;width:175px;height:77px;background:#fbfbfb;border-radius:4px"></div>
<div style="left:921px;top:721px;width:175px;height:38px;background:#e3e4e6;border-radius:4px 4px 0 0"></div>
<div style="left:935px;top:733.79px;font-size:15.6px;line-height:15.6px;font-weight:700;color:#333;white-space:nowrap;">Radio Frequency</div>
<svg style="left:1071px;top:735px;" width="16" height="9" viewBox="0 0 16 9"><path d="M1 8L8 1L15 8" fill="none" stroke="#8a8a8a" stroke-width="1.6"/></svg>
<div style="left:929.3px;top:770.88px;font-size:15.5px;line-height:15.5px;font-weight:400;color:#111;white-space:nowrap;">Power</div>
<div style="left:464px;width:600px;text-align:right;top:770.71px;font-size:15.7px;line-height:15.7px;font-weight:700;color:#000;white-space:nowrap;">1.20</div>
<div style="left:1071px;top:775.26px;font-size:12.1px;line-height:12.1px;font-weight:400;color:#888;white-space:nowrap;">kW</div>
<div style="left:921px;top:812px;width:175px;height:38px;background:#e3e4e6;border-radius:4px 4px 0 0"></div>
<div style="left:935px;top:824.79px;font-size:15.6px;line-height:15.6px;font-weight:700;color:#333;white-space:nowrap;">R.F.G</div>
<svg style="left:1071px;top:827px;" width="16" height="9" viewBox="0 0 16 9"><path d="M1 1L8 8L15 1" fill="none" stroke="#8a8a8a" stroke-width="1.6"/></svg>
<div style="left:1111px;top:352px;width:175px;height:110px;background:#fbfbfb;border-radius:4px"></div>
<div style="left:1111px;top:352px;width:175px;height:38px;background:#e3e4e6;border-radius:4px 4px 0 0"></div>
<div style="left:1125px;top:364.79px;font-size:15.6px;line-height:15.6px;font-weight:700;color:#333;white-space:nowrap;">Chamber</div>
<svg style="left:1261px;top:366px;" width="16" height="9" viewBox="0 0 16 9"><path d="M1 8L8 1L15 8" fill="none" stroke="#8a8a8a" stroke-width="1.6"/></svg>
<div style="left:1119.3px;top:401.88px;font-size:15.5px;line-height:15.5px;font-weight:400;color:#111;white-space:nowrap;">Set Temp.</div>
<div style="left:665px;width:600px;text-align:right;top:401.71px;font-size:15.7px;line-height:15.7px;font-weight:700;color:#000;white-space:nowrap;">5.0</div>
<div style="left:1271px;top:406.26px;font-size:12.1px;line-height:12.1px;font-weight:400;color:#888;white-space:nowrap;">C</div>
<div style="left:1119.3px;top:433.88px;font-size:15.5px;line-height:15.5px;font-weight:400;color:#111;white-space:nowrap;">Current Temp.</div>
<div style="left:665px;width:600px;text-align:right;top:433.71px;font-size:15.7px;line-height:15.7px;font-weight:700;color:#000;white-space:nowrap;">5.0</div>
<div style="left:1271px;top:438.26px;font-size:12.1px;line-height:12.1px;font-weight:400;color:#888;white-space:nowrap;">C</div>
<div style="left:1301px;top:352px;width:175px;height:91px;background:#fbfbfb;border-radius:4px"></div>
<div style="left:1301px;top:352px;width:175px;height:38px;background:#e3e4e6;border-radius:4px 4px 0 0"></div>
<div style="left:1315px;top:364.79px;font-size:15.6px;line-height:15.6px;font-weight:700;color:#333;white-space:nowrap;">Nebulizer</div>
<svg style="left:1451px;top:366px;" width="16" height="9" viewBox="0 0 16 9"><path d="M1 8L8 1L15 8" fill="none" stroke="#8a8a8a" stroke-width="1.6"/></svg>
<div style="left:1340.3px;top:406.71px;font-size:15.7px;line-height:15.7px;font-weight:700;color:#000;white-space:nowrap;">Glass</div>
<div style="left:1301px;top:456px;width:175px;height:110px;background:#fbfbfb;border-radius:4px"></div>
<div style="left:1301px;top:456px;width:175px;height:38px;background:#e3e4e6;border-radius:4px 4px 0 0"></div>
<div style="left:1315px;top:468.79px;font-size:15.6px;line-height:15.6px;font-weight:700;color:#333;white-space:nowrap;">Ar Gas</div>
<svg style="left:1451px;top:470px;" width="16" height="9" viewBox="0 0 16 9"><path d="M1 8L8 1L15 8" fill="none" stroke="#8a8a8a" stroke-width="1.6"/></svg>
<div style="left:1309.2px;top:505.88px;font-size:15.5px;line-height:15.5px;font-weight:400;color:#111;white-space:nowrap;">Career</div>
<div style="left:829px;width:600px;text-align:right;top:505.71px;font-size:15.7px;line-height:15.7px;font-weight:700;color:#000;white-space:nowrap;">0.85</div>
<div style="left:1437px;top:510.26px;font-size:12.1px;line-height:12.1px;font-weight:400;color:#888;white-space:nowrap;">L/min</div>
<div style="left:1309.2px;top:537.88px;font-size:15.5px;line-height:15.5px;font-weight:400;color:#111;white-space:nowrap;">Dilution</div>
<div style="left:829px;width:600px;text-align:right;top:537.71px;font-size:15.7px;line-height:15.7px;font-weight:700;color:#000;white-space:nowrap;">0.00</div>
<div style="left:1437px;top:542.26px;font-size:12.1px;line-height:12.1px;font-weight:400;color:#888;white-space:nowrap;">L/min</div>
<div style="left:1491px;top:352px;width:175px;height:136px;background:#fbfbfb;border-radius:4px"></div>
<div style="left:1491px;top:352px;width:175px;height:38px;background:#e3e4e6;border-radius:4px 4px 0 0"></div>
<div style="left:1503.8px;top:367.00px;font-size:13px;line-height:13px;font-weight:700;color:#333;white-space:nowrap;">Sample Introduction</div>
<svg style="left:1641px;top:366px;" width="16" height="9" viewBox="0 0 16 9"><path d="M1 8L8 1L15 8" fill="none" stroke="#8a8a8a" stroke-width="1.6"/></svg>
<div style="left:1499.3px;top:398.88px;font-size:15.5px;line-height:15.5px;font-weight:400;color:#111;white-space:nowrap;">Auto Sampler</div>
<div style="left:1530px;top:428.71px;font-size:15.7px;line-height:15.7px;font-weight:700;color:#000;white-space:nowrap;">AS20</div>
<div style="left:1499.3px;top:460.88px;font-size:15.5px;line-height:15.5px;font-weight:400;color:#111;white-space:nowrap;">Nozzle Dest.</div>
<div style="left:1057px;width:600px;text-align:right;top:460.71px;font-size:15.7px;line-height:15.7px;font-weight:700;color:#000;white-space:nowrap;">R0</div>
<div style="left:1491px;top:502px;width:175px;height:109px;background:#fbfbfb;border-radius:4px"></div>
<div style="left:1491px;top:502px;width:175px;height:38px;background:#e3e4e6;border-radius:4px 4px 0 0"></div>
<div style="left:1505px;top:514.79px;font-size:15.6px;line-height:15.6px;font-weight:700;color:#333;white-space:nowrap;">Peristaltic Pump</div>
<svg style="left:1641px;top:516px;" width="16" height="9" viewBox="0 0 16 9"><path d="M1 8L8 1L15 8" fill="none" stroke="#8a8a8a" stroke-width="1.6"/></svg>
<div style="left:1499.3px;top:552.38px;font-size:15.5px;line-height:15.5px;font-weight:400;color:#111;white-space:nowrap;">Settings</div>
<div style="left:1057px;width:600px;text-align:right;top:552.21px;font-size:15.7px;line-height:15.7px;font-weight:700;color:#000;white-space:nowrap;">Low</div>
<div style="left:1499.3px;top:583.88px;font-size:15.5px;line-height:15.5px;font-weight:400;color:#111;white-space:nowrap;">Speed</div>
<div style="left:1021px;width:600px;text-align:right;top:583.71px;font-size:15.7px;line-height:15.7px;font-weight:700;color:#000;white-space:nowrap;">15</div>
<div style="left:1628px;top:588.26px;font-size:12.1px;line-height:12.1px;font-weight:400;color:#888;white-space:nowrap;">r.p.m.</div>
<div style="left:1681px;top:352px;width:175px;height:122px;background:#fbfbfb;border-radius:4px"></div>
<div style="left:1681px;top:352px;width:175px;height:38px;background:#e3e4e6;border-radius:4px 4px 0 0"></div>
<div style="left:1695px;top:364.79px;font-size:15.6px;line-height:15.6px;font-weight:700;color:#333;white-space:nowrap;">Status</div>
<svg style="left:1831px;top:366px;" width="16" height="9" viewBox="0 0 16 9"><path d="M1 8L8 1L15 8" fill="none" stroke="#8a8a8a" stroke-width="1.6"/></svg>
<div style="left:1689.6px;top:406.71px;font-size:15.7px;line-height:15.7px;font-weight:700;color:#000;white-space:nowrap;">Waiting</div>
<div style="left:1689.6px;top:446.71px;font-size:15.7px;line-height:15.7px;font-weight:700;color:#000;white-space:nowrap;">Ready</div>
<div style="left:1681px;top:488px;width:175px;height:186px;background:#fbfbfb;border-radius:4px"></div>
<div style="left:1681px;top:488px;width:175px;height:38px;background:#e3e4e6;border-radius:4px 4px 0 0"></div>
<div style="left:1695px;top:500.79px;font-size:15.6px;line-height:15.6px;font-weight:700;color:#333;white-space:nowrap;">Stand</div>
<svg style="left:1831px;top:502px;" width="16" height="9" viewBox="0 0 16 9"><path d="M1 8L8 1L15 8" fill="none" stroke="#8a8a8a" stroke-width="1.6"/></svg>
<div style="left:1683px;top:529px;width:171px;height:31px;background:#aaffff"></div>
<div style="left:1720.6px;top:537.71px;font-size:15.7px;line-height:15.7px;font-weight:700;color:#000;white-space:nowrap;">Locked</div>
<div style="left:1720.6px;top:569.88px;font-size:15.5px;line-height:15.5px;font-weight:400;color:#111;white-space:nowrap;">Door</div>
<div style="left:1247px;width:600px;text-align:right;top:569.71px;font-size:15.7px;line-height:15.7px;font-weight:700;color:#000;white-space:nowrap;">Close</div>
<svg style="left:1692px;top:601px;" width="16" height="16" viewBox="0 0 16 16"><circle cx="8" cy="8" r="8" fill="#4ea26d"/><path d="M4.2 8.2L7 11L12 5.4" fill="none" stroke="#fff" stroke-width="2.2"/></svg>
<div style="left:1720.6px;top:601.38px;font-size:15.5px;line-height:15.5px;font-weight:400;color:#111;white-space:nowrap;">Temp.</div>
<div style="left:1247px;width:600px;text-align:right;top:601.21px;font-size:15.7px;line-height:15.7px;font-weight:700;color:#000;white-space:nowrap;">OK</div>
<svg style="left:1692px;top:638px;" width="16" height="16" viewBox="0 0 16 16"><circle cx="8" cy="8" r="8" fill="#4ea26d"/><path d="M4.2 8.2L7 11L12 5.4" fill="none" stroke="#fff" stroke-width="2.2"/></svg>
<div style="left:1720.6px;top:638.88px;font-size:15.5px;line-height:15.5px;font-weight:400;color:#111;white-space:nowrap;">Exhaust duct</div>
<div style="left:1247px;width:600px;text-align:right;top:638.71px;font-size:15.7px;line-height:15.7px;font-weight:700;color:#000;white-space:nowrap;">OK</div>
<div style="left:1681px;top:688px;width:175px;height:77px;background:#fbfbfb;border-radius:4px"></div>
<div style="left:1681px;top:688px;width:175px;height:38px;background:#e3e4e6;border-radius:4px 4px 0 0"></div>
<div style="left:1695px;top:700.79px;font-size:15.6px;line-height:15.6px;font-weight:700;color:#333;white-space:nowrap;">Ar Gas</div>
<svg style="left:1831px;top:702px;" width="16" height="9" viewBox="0 0 16 9"><path d="M1 8L8 1L15 8" fill="none" stroke="#8a8a8a" stroke-width="1.6"/></svg>
<div style="left:1689.3px;top:737.88px;font-size:15.5px;line-height:15.5px;font-weight:400;color:#111;white-space:nowrap;">Pressure</div>
<div style="left:1222px;width:600px;text-align:right;top:737.71px;font-size:15.7px;line-height:15.7px;font-weight:700;color:#000;white-space:nowrap;">471</div>
<div style="left:1829px;top:742.26px;font-size:12.1px;line-height:12.1px;font-weight:400;color:#888;white-space:nowrap;">kPa</div>
<div style="left:1681px;top:779px;width:175px;height:122px;background:#fbfbfb;border-radius:4px"></div>
<div style="left:1681px;top:779px;width:175px;height:38px;background:#e3e4e6;border-radius:4px 4px 0 0"></div>
<div style="left:1695px;top:791.79px;font-size:15.6px;line-height:15.6px;font-weight:700;color:#333;white-space:nowrap;">Vac State</div>
<svg style="left:1831px;top:793px;" width="16" height="9" viewBox="0 0 16 9"><path d="M1 8L8 1L15 8" fill="none" stroke="#8a8a8a" stroke-width="1.6"/></svg>
<div style="left:1689.3px;top:828.71px;font-size:15.7px;line-height:15.7px;font-weight:700;color:#000;white-space:nowrap;">Ready</div>
<div style="left:1720.4px;top:865.71px;font-size:15.7px;line-height:15.7px;font-weight:700;color:#000;white-space:nowrap;">Rotary Pump</div>
<div style="left:139px;top:920px;width:92px;height:23px;background:#f0f0f0;border-left:1px solid #fff;border-bottom:1px solid #000;border-right:1px solid #000;border-radius:0 0 0 4px;box-sizing:border-box"></div>
<div style="left:140px;top:941px;width:90px;height:1px;background:#a0a0a0"></div>
<div style="left:231px;top:920px;width:88px;height:22px;background:#f0f0f0;border-top:1px solid #000;border-left:1px solid #fff;border-right:1px solid #000;border-bottom:1px solid #000;box-sizing:border-box"></div>
<div style="left:317px;top:921px;width:1px;height:20px;background:#a0a0a0"></div>
<div style="left:232px;top:939px;width:85px;height:1px;background:#a0a0a0"></div>
<div style="left:319px;top:920px;width:90px;height:22px;background:#f0f0f0;border-top:1px solid #000;border-left:1px solid #fff;border-right:1px solid #000;border-bottom:1px solid #000;box-sizing:border-box"></div>
<div style="left:407px;top:921px;width:1px;height:20px;background:#a0a0a0"></div>
<div style="left:320px;top:939px;width:87px;height:1px;background:#a0a0a0"></div>
<div style="left:409px;top:920px;width:91px;height:22px;background:#f0f0f0;border-top:1px solid #000;border-left:1px solid #fff;border-right:1px solid #000;border-bottom:1px solid #000;box-sizing:border-box"></div>
<div style="left:498px;top:921px;width:1px;height:20px;background:#a0a0a0"></div>
<div style="left:410px;top:939px;width:88px;height:1px;background:#a0a0a0"></div>
<div style="left:159px;top:926.27px;font-size:11.5px;line-height:11.5px;font-weight:400;color:#000;white-space:nowrap;letter-spacing:-0.3px">Instrument St...</div>
<div style="left:-316.3px;width:1200px;text-align:center;top:926.02px;font-size:11.2px;line-height:11.2px;font-weight:400;color:#000;white-space:nowrap;letter-spacing:-0.3px">Analysis</div>
<div style="left:-226px;width:1200px;text-align:center;top:926.02px;font-size:11.2px;line-height:11.2px;font-weight:400;color:#000;white-space:nowrap;letter-spacing:-0.3px">Calibration ...</div>
<div style="left:-136px;width:1200px;text-align:center;top:926.02px;font-size:11.2px;line-height:11.2px;font-weight:400;color:#000;white-space:nowrap;letter-spacing:-0.3px">Profile</div>
<div style="left:500px;top:920px;width:1410px;height:1px;background:#000"></div>
<div style="left:127px;top:946px;width:1790px;height:1px;background:#a0a0a0"></div>
<div style="left:121px;top:944px;width:6px;height:1px;background:#fff"></div>
<svg style="left:0px;top:0px;" width="1920" height="947" viewBox="0 0 1920 947"><rect x="8" y="9" width="16" height="12" rx="4" fill="#9ab8f0" opacity="0.6"/><rect x="10" y="8.5" width="2" height="9" fill="#1a3ad8"/><rect x="14" y="10" width="2" height="8" fill="#1a3ad8"/><rect x="18" y="11.5" width="2" height="6" fill="#1a3ad8"/><rect x="9" y="17" width="14" height="4" rx="1.5" fill="#7ad0e8"/><rect x="180.7" y="109" width="3.3" height="11" fill="#cfcfcf"/><rect x="179.6" y="119.7" width="5.9" height="11.5" fill="#e53f3f"/><rect x="186.8" y="108.8" width="11.8" height="3.2" rx="1" fill="#1d1d1d"/><rect x="190.4" y="112" width="3.3" height="8" fill="#cfcfcf"/><rect x="189" y="119.7" width="6" height="11.5" fill="#2f8cf8"/><rect x="747" y="401" width="3" height="16" fill="#8e979e"/><rect x="747" y="403.5" width="3" height="1.6" fill="#dde1e4"/><path d="M750 404L754 408.6L750 413.5Z" fill="#414a50"/><path d="M750 406.5L754 408.6L750 407.5Z" fill="#c0c6ca"/><rect x="747" y="492" width="3" height="16" fill="#8e979e"/><rect x="747" y="494.5" width="3" height="1.6" fill="#dde1e4"/><path d="M750 495L754 499.6L750 504.5Z" fill="#414a50"/><path d="M750 497.5L754 499.6L750 498.5Z" fill="#c0c6ca"/><rect x="933" y="439" width="2.2" height="16" fill="#8e979e"/><rect x="933" y="440.5" width="2.2" height="1.5" fill="#dde1e4"/><path d="M935 442.5Q939 443.5 942 442V452Q939 451 935 452Z" fill="#7ab6f2"/><path d="M935 446.6H942V448.3H935Z" fill="#2f5ff0"/><path d="M935 443L938.5 447.2L935 451.5Z" fill="#3a4a78"/><rect x="942" y="441" width="5" height="12.5" fill="#8595a6"/><rect x="942" y="442" width="5" height="1.5" fill="#dde1e4"/><path d="M1312 412.5L1314.5 410H1325.5V411.3H1328V414H1325.5V415H1314.5Z" fill="#58bfec"/><rect x="1314.5" y="411.3" width="11" height="0.9" fill="#d0eefa"/><rect x="1321" y="415" width="3" height="6" fill="#58bfec"/><rect x="1321.7" y="415.5" width="0.8" height="5.5" fill="#b8e6f8"/><rect x="1503" y="431" width="3" height="12" fill="#3f434a"/><rect x="1503" y="431" width="14.5" height="2" fill="#545a6a"/><path d="M1512 429H1515V435L1513.5 436.5L1512 435Z" fill="#70768a"/><rect x="1507" y="437" width="1.8" height="2" fill="#00bcc8"/><rect x="1510" y="437" width="1.8" height="2" fill="#00bcc8"/><rect x="1513" y="437" width="1.8" height="2" fill="#00bcc8"/><rect x="1506" y="439" width="11.5" height="3.5" fill="#8a8e9c"/><rect x="1506" y="442" width="11.5" height="1" fill="#505868"/><circle cx="1505" cy="443.5" r="1" fill="#111"/><circle cx="1515" cy="443.5" r="1" fill="#111"/><path d="M1696 544V542.5A4 4 0 0 1 1704 542.5V544H1702V542.5A2 2 0 0 0 1698 542.5V544Z" fill="#efc35a"/><rect x="1692" y="544" width="16" height="8.8" fill="#efc35a"/><path d="M1699 551H1701V548.5L1702 547.5L1700 545.8L1698 547.5L1699 548.5Z" fill="#4a4f66"/><rect x="1695" y="569.2" width="10" height="15.4" rx="1" fill="#efc35a"/><circle cx="1703.2" cy="578" r="0.7" fill="#6a5a3a"/><rect x="1693" y="868" width="5.5" height="12" fill="#8a8e9e"/><rect x="1693.5" y="872" width="1" height="1" fill="#44486a"/><rect x="1693.5" y="875" width="1" height="1" fill="#44486a"/><rect x="1698" y="869" width="9" height="11" fill="#44494d"/><rect x="1700" y="867" width="5" height="2" fill="#555"/><rect x="1700.5" y="871" width="1" height="7" fill="#000"/><rect x="1702.7" y="871" width="1" height="7" fill="#000"/><rect x="1699" y="872" width="0.8" height="5" fill="#000"/><rect x="1705" y="872" width="0.8" height="5" fill="#000"/><rect x="1693" y="879.5" width="14" height="1.2" fill="#1a1a1a"/><circle cx="1695" cy="881" r="1" fill="#000"/><circle cx="1705" cy="881" r="1" fill="#000"/><defs><linearGradient id="wg" x1="0" y1="0" x2="1" y2="1"><stop offset="0" stop-color="#c8c8cc"/><stop offset="1" stop-color="#8a8a8e"/></linearGradient><linearGradient id="fy" x1="0" y1="0" x2="0" y2="1"><stop offset="0" stop-color="#fff3b8"/><stop offset="1" stop-color="#f0c850"/></linearGradient></defs><path d="M3 57H9L10 58.5H16V69H3Z" fill="#fbe7a0" stroke="#d9a420" stroke-width="1"/><path d="M5 62H19L16.5 69H3Z" fill="url(#fy)" stroke="#d9a420" stroke-width="1"/><path d="M9 57Q12 53.5 16 55L18 54.5L18.5 61L13 60L15 58.8Q13 57.5 11 59Z" fill="#2a2a2a"/><path d="M27 55.5H32L33 57H38V62H27Z" fill="#fbe7a0" stroke="#d9a420" stroke-width="1"/><path d="M28 59.5H41L39 63H27Z" fill="#f0c850" stroke="#d9a420" stroke-width="0.8"/><rect x="31" y="63" width="6" height="3" fill="#111"/><ellipse cx="30" cy="67" rx="3.2" ry="2.2" fill="#111"/><ellipse cx="38.5" cy="67" rx="3.2" ry="2.2" fill="#111"/><ellipse cx="30" cy="67.3" rx="2" ry="1.2" fill="#7ab4f0"/><ellipse cx="38.5" cy="67.3" rx="2" ry="1.2" fill="#7ab4f0"/><path d="M49 54H64V68L63 69H49Z" fill="#34587e"/><rect x="49" y="54" width="1.3" height="15" fill="#5a7ea6"/><rect x="52" y="54.5" width="8.5" height="5.5" fill="#dcdcdc"/><rect x="52" y="62" width="9" height="7" fill="#f2f2f2"/><rect x="57" y="63.5" width="2" height="3" fill="#34587e"/><path d="M79.5 54H87L85.5 61H76Z" fill="#e4f6fb" stroke="#9aa" stroke-width="0.7"/><path d="M73 61H87L88 66L84 69H74L72 66Z" fill="#d8d8d8" stroke="#777" stroke-width="0.7"/><path d="M74.5 62H85L84 65H75Z" fill="#111"/><g fill="#2a6ea0"><circle cx="96.5" cy="54.5" r="0.8"/><circle cx="96.5" cy="60.5" r="0.8"/><circle cx="96.5" cy="62.5" r="0.8"/><circle cx="96.5" cy="68.5" r="0.8"/></g><rect x="95" y="56.8" width="3" height="2" fill="#3a8ab8"/><path d="M98 57.8H101" stroke="#3a8ab8"/><rect x="95" y="64.5" width="3" height="2" fill="#3a8ab8"/><path d="M98 65.5H101" stroke="#3a8ab8"/><path d="M101.5 54.5H105L106 55.5H110.5V61H101.5Z" fill="url(#fy)" stroke="#d9b040" stroke-width="0.8"/><path d="M101.5 62H105L106 63H110.5V68.5H101.5Z" fill="url(#fy)" stroke="#d9b040" stroke-width="0.8"/><g fill="#f4f4f4" stroke="#cfcfcf" stroke-width="0.8"><path d="M125.5 54.5H132L133.5 56V64.5H125.5Z"/><path d="M130.5 58.5H137L138.5 60V68.5H130.5Z"/><path d="M148.5 57H155V64H148.5Z" fill="#dcdcdc"/><path d="M154 59H160L161.5 60.5V68.5H154Z"/></g><g stroke="#d0d0d0" stroke-width="0.7"><path d="M132 61H137M132 63H137M132 65H137M132 67H137M155.5 62H160M155.5 64H160M155.5 66H160"/></g><rect x="173.5" y="51.5" width="22" height="21" fill="#cce4f7" stroke="#99d1ff" stroke-width="1"/><rect x="177" y="54" width="16" height="15" fill="#3a3a3a"/><rect x="178" y="55.2" width="14" height="12.8" fill="url(#wg)"/><rect x="178" y="55.5" width="4" height="12.5" fill="#8a5ae0"/><g fill="#111"><circle cx="180" cy="57.5" r="0.9"/><circle cx="180" cy="60.5" r="0.9"/><circle cx="180" cy="63.5" r="0.9"/><circle cx="180" cy="66.3" r="0.9"/></g><rect x="183" y="56" width="9" height="11.5" fill="#eeeeee"/><rect x="199" y="54" width="16" height="15" fill="#3a3a3a"/><rect x="200" y="55.2" width="14" height="12.8" fill="url(#wg)"/><rect x="200" y="61.5" width="14" height="4" fill="#f0f0f0"/><path d="M201 63.5H203.5M204.5 63.5H206.5M207.5 63.5H208.5" stroke="#5a5ad0" stroke-width="0.9"/><rect x="200" y="66.3" width="14" height="1" fill="#ddd"/><rect x="222" y="54.5" width="15" height="14.5" fill="#ececec" stroke="#dadada" stroke-width="0.8"/><rect x="233" y="55" width="4" height="13" fill="#f6f6f6"/><rect x="252" y="54" width="16" height="15" fill="#3a3a3a"/><rect x="253" y="55.2" width="14" height="12.8" fill="url(#wg)"/><rect x="255" y="56" width="12" height="6" fill="#f2f2f2"/><path d="M256 61L258 58L260 61L262 57L264 61L266 58" fill="none" stroke="#30a070" stroke-width="0.8"/><rect x="275" y="54" width="16" height="15" fill="#3a3a3a"/><rect x="276" y="55.2" width="14" height="12.8" fill="url(#wg)"/><rect x="281" y="59" width="9" height="7" fill="#f4f4f4"/><rect x="281" y="59" width="9" height="1.3" fill="#e03030"/><path d="M282 62H283M285 62H289M282 64.3H283M285 64.3H289" stroke="#e03030" stroke-width="1"/><rect x="298" y="54" width="16" height="15" fill="#3a3a3a"/><rect x="299" y="55.2" width="14" height="12.8" fill="url(#wg)"/><rect x="299" y="61" width="8.5" height="7" fill="#f4f4f4"/><rect x="299" y="61" width="8.5" height="1.2" fill="#70a0c0"/><path d="M300 63.8H301M302.5 63.8H306M300 66H301M302.5 66H306" stroke="#3a7aa0" stroke-width="0.9"/><rect x="321" y="54" width="16" height="15" fill="#3a3a3a"/><rect x="322" y="55.2" width="14" height="12.8" fill="url(#wg)"/><rect x="328" y="61" width="8.5" height="7" fill="#d6d6f8"/><path d="M329 63H335.5M329 65H335.5M329 67H335.5" stroke="#fff" stroke-width="0.7"/><rect x="350" y="54" width="16" height="15" fill="#3a3a3a"/><rect x="351" y="55.2" width="14" height="12.8" fill="url(#wg)"/><rect x="351.5" y="56" width="13" height="11.5" fill="#f6f6f6"/><rect x="351.5" y="62" width="13" height="5.5" fill="#30b080"/><path d="M352.5 63.8H355M356.5 63.8H359M360.5 63.8H363M352.5 65.8H355M356.5 65.8H359M360.5 65.8H363" stroke="#fff" stroke-width="0.8"/><path d="M353 60.5L356 57.5M359 60.5L362.5 57" stroke="#e060e0" stroke-width="0.8"/><path d="M378.5 63L383 60.5L387 63V68L382 69.5L378.5 67Z" fill="#e84040"/><path d="M381 66L386 61.5L388 64L385 69Z" fill="#2a80e0"/><ellipse cx="384" cy="58" rx="2.8" ry="3.4" fill="#e8d060"/><rect x="387" y="61" width="7" height="8.5" fill="#2a80c8"/><rect x="388.3" y="62.3" width="4.4" height="6" fill="#fff"/><rect x="388.8" y="63" width="1.5" height="1.5" fill="#222"/><rect x="388.8" y="66" width="1.5" height="1.5" fill="#111"/><rect x="391" y="66" width="1.5" height="1.5" fill="#111"/><rect x="398.5" y="51.5" width="22" height="21" fill="#cce4f7" stroke="#99d1ff" stroke-width="1"/><ellipse cx="409.5" cy="63" rx="7.8" ry="5.8" fill="#d8d8d8" stroke="#a8a8a8" stroke-width="0.8"/><ellipse cx="409.5" cy="62" rx="6.5" ry="4.6" fill="#eeeeee"/><circle cx="409.5" cy="62" r="2" fill="#9ab8b8"/><path d="M410 63L417 55.5" stroke="#e8a820" stroke-width="1.4"/><path d="M431.5 63.5L433.5 58H435V55.5H438V58H439.5L441 63.5Z" fill="#e8e4c0" stroke="#7a7a50" stroke-width="0.8"/><path d="M436 62L438 57H439.5V54H442.5V57H444L445.5 62Z" fill="#eeeac8" stroke="#7a7a50" stroke-width="0.8"/><circle cx="441.5" cy="64.5" r="3.6" fill="#f2c21e" stroke="#f2c21e" stroke-width="0"/><circle cx="441.5" cy="64.5" r="4.6" fill="none" stroke="#d8a010" stroke-width="2" stroke-dasharray="1.8 1.8"/><circle cx="441.5" cy="64.5" r="1.4" fill="#fff"/><ellipse cx="461" cy="62.5" rx="7.5" ry="4.5" fill="#4a60e0" transform="rotate(-25 461 62.5)"/><ellipse cx="461" cy="62.5" rx="5" ry="2.2" fill="#9ab0f8" transform="rotate(-25 461 62.5)"/><circle cx="460" cy="60" r="3.6" fill="#e02020"/><circle cx="459" cy="59" r="1.2" fill="#ff9090"/><rect x="465.5" y="62" width="2.5" height="2.5" fill="#f0a020"/><rect x="476.5" y="54.5" width="11.5" height="13.5" fill="#f4f4f4" stroke="#444" stroke-width="1"/><path d="M478 59L480 57L482 58M484 59L486 56.5" stroke="#e060d0" stroke-width="0.8"/><path d="M480 62H483L484 68H479Z" fill="#f0d040"/><path d="M485 64.5H492M485 64.5L488 62M485 64.5L488 67" stroke="#f07020" stroke-width="1.6"/><rect x="499.5" y="55.5" width="8" height="12.5" fill="#f0f4f8" stroke="#4a80c8" stroke-width="1"/><rect x="504" y="58" width="7" height="8" fill="#d8d8d8" stroke="#888" stroke-width="0.6"/><path d="M501 59V65" stroke="#30b080" stroke-width="1.2"/><circle cx="511" cy="65" r="3.4" fill="#f2c21e"/><circle cx="511" cy="65" r="4.4" fill="none" stroke="#d8a010" stroke-width="2" stroke-dasharray="1.7 1.7"/><circle cx="511" cy="65" r="1.3" fill="#fff"/><rect x="528.5" y="54.5" width="15" height="14" fill="#f8f8f8" stroke="#333" stroke-width="1"/><path d="M529 62H543M536 55V68" stroke="#40b8e0" stroke-width="0.6"/><text x="536" y="67" font-family="Liberation Serif" font-weight="700" font-size="13" text-anchor="middle" fill="#111">1</text><rect x="551.5" y="54.5" width="15" height="14" fill="#f8f8f8" stroke="#333" stroke-width="1"/><path d="M552 62H566M559 55V68" stroke="#60c040" stroke-width="0.6"/><text x="559" y="67" font-family="Liberation Serif" font-weight="700" font-size="13" text-anchor="middle" fill="#111">2</text><rect x="574.5" y="54.5" width="15" height="14" fill="#f8f8f8" stroke="#333" stroke-width="1"/><path d="M575 62H589M582 55V68" stroke="#f080b0" stroke-width="0.6"/><text x="582" y="67" font-family="Liberation Serif" font-weight="700" font-size="13" text-anchor="middle" fill="#111">3</text><text x="610.5" y="68.3" font-family="Liberation Sans" font-weight="700" font-size="17" text-anchor="middle" fill="#0a1f80">?</text><rect x="142.5" y="924.5" width="12.5" height="11.5" fill="#fff" stroke="#222" stroke-width="1"/><path d="M144.5 927H151M144.5 929.7H149M144.5 932.4H152" stroke="#222" stroke-width="1.3"/><path d="M238.6 923.5H242.4V928L246.5 934Q247 937.5 244 937.5H237Q234 937.5 234.5 934L238.6 928Z" fill="#00e8e0" stroke="#111" stroke-width="1.2"/><g stroke="#8a8a8a" stroke-width="0.8" fill="none"><rect x="323.5" y="923.5" width="15" height="15"/><path d="M323.5 927.5H338.5M323.5 931.5H338.5M323.5 935H338.5M327.5 923.5V938.5M331.5 923.5V938.5M335 923.5V938.5"/></g><path d="M323.5 938.5L338.5 923" stroke="#1030f0" stroke-width="1.6"/><g stroke="#8a8a8a" stroke-width="0.8" fill="none"><rect x="413.5" y="923.5" width="15" height="15"/><path d="M413.5 927.5H428.5M413.5 931.5H428.5M413.5 935H428.5M417.5 923.5V938.5M421.5 923.5V938.5M425 923.5V938.5"/></g><path d="M413.5 938L417.5 926.5L421.5 936.5H428.5" fill="none" stroke="#e02020" stroke-width="1.2"/></svg>
<div style="left:1917px;top:0px;width:3px;height:947px;background:#0b3d9a"></div>
</body></html>
